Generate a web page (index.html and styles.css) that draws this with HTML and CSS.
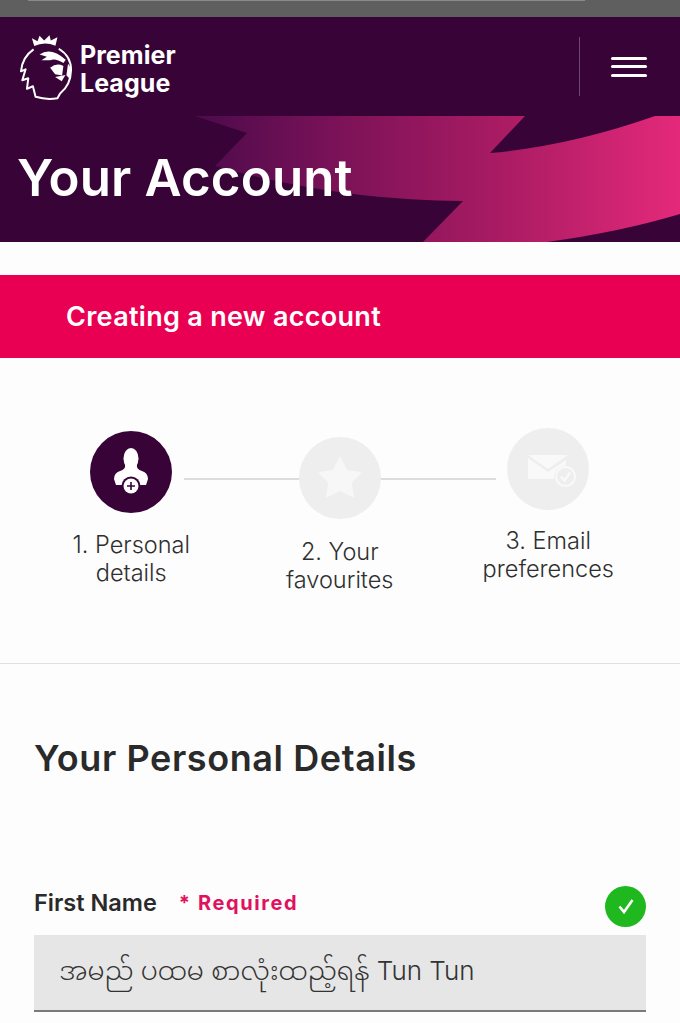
FILE: index.html
```html
<!DOCTYPE html>
<html lang="en">
<head>
<meta charset="utf-8">
<title>Your Account</title>
<link rel="stylesheet" href="styles.css">
</head>
<body>
<div class="statusbar"><div class="statusbar-edge"></div></div>
<header class="masthead">
  <div class="brand">
    <svg class="lion" viewBox="50 95 175 210" aria-hidden="true">
      <path d="M102 137 L95 113 L112 122 L118 106 L132 120 L148 104 L152 120 L172 110 L166 136 Q133 122 102 137Z" fill="#fff"/>
      <path d="M100 147 Q66 170 62 213 L76 207 L66 240 L84 234 L80 266 L98 258 L106 290 Q140 300 172 294 L180 280 Q212 255 213 210 Q214 168 176 145" fill="none" stroke="#fff" stroke-width="6" stroke-linejoin="round"/>
      <path d="M118 162 Q152 138 197 178 L190 188 Q165 172 150 180 L124 180 L140 169Z" fill="#fff"/>
      <path d="M150 202 Q170 186 190 197 L186 226 L165 222Z" fill="#fff"/>
      <path d="M165 230 L196 224 L185 243Z" fill="#fff"/>
      <path d="M204 190 L214 205 L208 235 L199 225Z" fill="#fff"/>
    </svg>
    <div class="wordmark"><span class="wordmark-line">Premier</span><span class="wordmark-line">League</span></div>
  </div>
  <div class="menu">
    <span class="menu-bar"></span><span class="menu-bar"></span><span class="menu-bar"></span>
  </div>
</header>
<section class="hero">
  <svg class="hero-art" viewBox="0 0 680 126" preserveAspectRatio="none" aria-hidden="true">
    <defs>
      <linearGradient id="swoosh" gradientUnits="userSpaceOnUse" x1="195" y1="0" x2="680" y2="0">
        <stop offset="0" stop-color="#4c0a4c"/>
        <stop offset="0.3" stop-color="#7c1258"/>
        <stop offset="0.65" stop-color="#ac1c64"/>
        <stop offset="1" stop-color="#e4297a"/>
      </linearGradient>
    </defs>
    <path d="M195 0 L247 17 L215 50 Q340 85 463 85 L423 126 L547 126 Q620 116 680 98 L680 0 L655 0 Q570 30 490 37 L525 0Z" fill="url(#swoosh)"/>
  </svg>
  <h1 class="hero-title">Your Account</h1>
</section>
<div class="banner">Creating a new account</div>
<section class="steps">
  <div class="steps-line"></div>
  <div class="step step-first">
    <div class="step-circle step-circle-active">
      <svg class="step-icon" viewBox="0 0 64 64" aria-hidden="true">
        <ellipse cx="32" cy="18.500" rx="7.500" ry="10.500" fill="#fff"/>
        <path d="M26 25 Q27 29 21 31 Q15 33 15 39 L17 45 L47 45 L49 39 Q49 33 43 31 Q37 29 38 25Z" fill="#fff"/>
        <circle cx="32" cy="46" r="9.500" fill="#380438"/>
        <circle cx="32" cy="46" r="7.500" fill="#fff"/>
        <path d="M32 42 V50 M28 46 H36" stroke="#380438" stroke-width="1.600"/>
      </svg>
    </div>
    <div class="step-label">1. Personal details</div>
  </div>
  <div class="step step-second">
    <div class="step-circle">
      <svg class="step-icon" viewBox="0 0 64 64" aria-hidden="true">
        <path d="M32 12 L38.500 25 L52 27 L42.500 36.500 L45 50 L32 44 L19 50 L21.500 36.500 L12 27 L25.500 25Z" fill="#f7f7f7" stroke="#f7f7f7" stroke-width="2" stroke-linejoin="round"/>
      </svg>
    </div>
    <div class="step-label step-label-lowered">2. Your favourites</div>
  </div>
  <div class="step step-third">
    <div class="step-circle">
      <svg class="step-icon" viewBox="0 0 64 64" aria-hidden="true">
        <path d="M12 18 H52 L32 32Z" fill="#f9f9f9"/>
        <path d="M12 21 L32 35 L50 23 V28 Q38 30 38 42 H12Z" fill="#f9f9f9"/>
        <circle cx="49.500" cy="39.500" r="9.500" fill="none" stroke="#f9f9f9" stroke-width="2"/>
        <path d="M45 39.500 L48.500 43.500 L54 35.500" fill="none" stroke="#f9f9f9" stroke-width="2.500"/>
      </svg>
    </div>
    <div class="step-label step-label-raised">3. Email preferences</div>
  </div>
</section>
<main class="details">
  <h2 class="details-title">Your Personal Details</h2>
  <div class="field-head">
    <span class="field-label">First Name</span>
    <span class="field-required">* Required</span>
    <span class="field-ok">
      <svg class="field-ok-icon" viewBox="0 0 20 20" aria-hidden="true"><path d="M3.500 10.500 L8 16 L16.500 4" fill="none" stroke="#fff" stroke-width="2.600"/></svg>
    </span>
  </div>
  <div class="field-input">အမည် ပထမ စာလုံးထည့်ရန် Tun Tun</div>
</main>
</body>
</html>
```
FILE: styles.css
```css
* { box-sizing: border-box; }
html, body { margin: 0; padding: 0; }
body {
  width: 680px;
  height: 1023px;
  overflow: hidden;
  background: #fdfdfd;
  color: #2a2a2a;
  font-family: Inter, "Noto Sans Myanmar", "Noto Sans", sans-serif;
}
.statusbar { height: 17px; background: #5f5f5f; padding: 0 95px 0 28px; }
.statusbar-edge { height: 1px; background: #8a8a8a; }
.masthead {
  height: 99px;
  background: #380438;
  display: flex;
  align-items: center;
  justify-content: space-between;
  padding: 0 33px 0 17px;
}
.brand { display: flex; align-items: center; gap: 5px; }
.lion { width: 58px; height: 70px; display: block; }
.wordmark { margin-top: 4px; color: #fff; font-size: 25px; font-weight: 700; letter-spacing: 0.05px; }
.wordmark-line { display: block; height: 28px; line-height: 28px; }
.menu {
  height: 59px;
  width: 68px;
  padding-left: 31px;
  border-left: 1px solid #6d4a6d;
  display: flex;
  flex-direction: column;
  justify-content: center;
  gap: 5.500px;
}
.menu-bar { display: block; height: 3px; background: #fff; border-radius: 2px; }
.hero {
  position: relative;
  height: 126px;
  background: #380438;
  overflow: hidden;
  padding: 32px 17px 0;
}
.hero-art { position: absolute; inset: 0; width: 100%; height: 100%; }
.hero-title {
  position: relative;
  margin: 0;
  color: #fff;
  font-size: 51px;
  line-height: 60px;
  font-weight: 600;
  letter-spacing: 0.15px;
}
.banner {
  margin-top: 33px;
  height: 83px;
  background: #e90052;
  color: #fff;
  font-size: 27px;
  font-weight: 600;
  letter-spacing: 0.3px;
  padding-left: 66px;
  display: flex;
  align-items: center;
}
.steps {
  position: relative;
  height: 306px;
  padding: 0 27px;
  display: grid;
  grid-template-columns: repeat(3, 208.500px);
  align-items: start;
  border-bottom: 1px solid #e0e0e0;
}
.steps-line {
  position: absolute;
  top: 120px;
  left: 184px;
  right: 184px;
  height: 2px;
  background: #dddddd;
}
.step { position: relative; display: flex; flex-direction: column; align-items: center; }
.step-first { padding-top: 73px; }
.step-second { padding-top: 79px; }
.step-third { padding-top: 70px; }
.step-circle {
  width: 82px;
  height: 82px;
  border-radius: 50%;
  background: #eeeeee;
  display: flex;
  align-items: center;
  justify-content: center;
}
.step-circle-active { background: #380438; }
.step-icon { width: 64px; height: 64px; display: block; }
.step-label {
  width: 150px;
  margin-top: 18px;
  text-align: center;
  font-size: 23.500px;
  line-height: 28px;
  font-weight: 300;
  color: #2f2f2f;
}
.step-label-raised { margin-top: 17px; }
.step-label-lowered { margin-top: 19px; }
.details { padding: 72px 34px 0; }
.details-title { margin: 0; font-size: 36px; line-height: 44px; font-weight: 600; letter-spacing: 0.6px; color: #2a2a2a; }
.field-head { display: flex; align-items: center; margin-top: 100px; height: 44px; }
.field-label { font-size: 23.500px; font-weight: 600; }
.field-required { margin-left: 22px; margin-top: 2px; font-size: 20px; font-weight: 700; color: #e0115f; letter-spacing: 1.600px; }
.field-ok {
  margin-left: auto;
  margin-top: 8px;
  width: 41px;
  height: 41px;
  border-radius: 50%;
  background: #1fb81f;
  display: flex;
  align-items: center;
  justify-content: center;
}
.field-ok-icon { width: 20px; height: 20px; display: block; }
.field-input {
  margin-top: 11px;
  height: 77px;
  background: #e6e6e6;
  border-bottom: 2px solid #7a7a7a;
  padding: 2px 25px 0;
  display: flex;
  align-items: center;
  font-size: 26px;
  font-weight: 300;
  color: #333;
}
```
